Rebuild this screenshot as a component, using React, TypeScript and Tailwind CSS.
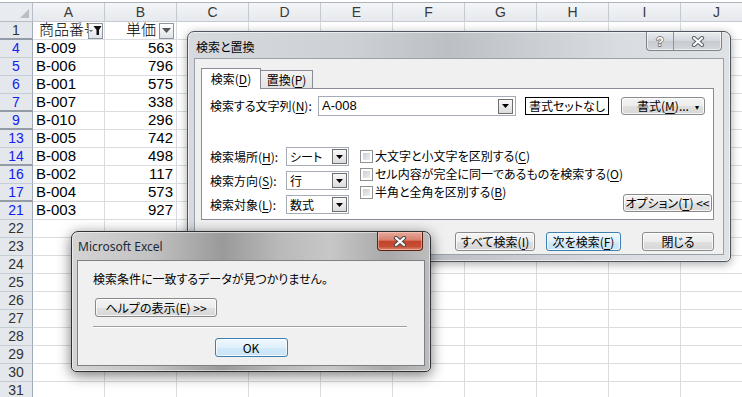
import React from "react";

type Row = { n: number; a?: string; b?: number };

const cols = ["A", "B", "C", "D", "E", "F", "G", "H", "I", "J"];

const rows: Row[] = [
  { n: 1 },
  { n: 4, a: "B-009", b: 563 },
  { n: 5, a: "B-006", b: 796 },
  { n: 6, a: "B-001", b: 575 },
  { n: 7, a: "B-007", b: 338 },
  { n: 9, a: "B-010", b: 296 },
  { n: 13, a: "B-005", b: 742 },
  { n: 14, a: "B-008", b: 498 },
  { n: 16, a: "B-002", b: 117 },
  { n: 17, a: "B-004", b: 573 },
  { n: 21, a: "B-003", b: 927 },
  ...Array.from({ length: 10 }, (_, i) => ({ n: 22 + i })),
];

const ui =
  "font-['Noto_Sans_CJK_JP',sans-serif] text-[12px] leading-[14px] text-black whitespace-nowrap [font-feature-settings:'palt']";

const U = ({ children }: { children: React.ReactNode }) => (
  <span className="underline underline-offset-[2px]">{children}</span>
);

function WinButton({
  children,
  className = "",
  primary = false,
}: {
  children: React.ReactNode;
  className?: string;
  primary?: boolean;
}) {
  return (
    <div
      className={`flex shrink-0 items-center justify-center rounded-[3px] border shadow-[inset_0_0_0_1px_rgba(255,255,255,0.75)] ${
        primary
          ? "border-[#3c7fb1] bg-[linear-gradient(#eef7fd,#e0f0fb_50%,#d2e9f8_51%,#c9e4f6)]"
          : "border-[#8a8a8a] bg-[linear-gradient(#f4f4f4,#ececec_50%,#e0e0e0_51%,#d6d6d6)]"
      } ${className}`}
    >
      {children}
    </div>
  );
}

function DropBtn() {
  return (
    <div className="flex h-[15px] w-[15px] shrink-0 items-center justify-center border border-[#6f6f6f] bg-[linear-gradient(#f8f8f8,#dcdcdc)]">
      <svg width="7" height="4" viewBox="0 0 7 4">
        <path d="M0 0h7L3.5 4z" fill="#000" />
      </svg>
    </div>
  );
}

function Select({ value }: { value: string }) {
  return (
    <div className="flex h-[19px] w-[63px] items-center border border-[#a5acb5] bg-white pl-[3px] pr-[1px]">
      <span className="flex-1">{value}</span>
      <DropBtn />
    </div>
  );
}

function Check({ children }: { children: React.ReactNode }) {
  return (
    <div className="flex h-[18px] items-center gap-[2px]">
      <div className="h-[13px] w-[13px] shrink-0 border border-[#8e8f8f] bg-white p-[2px]">
        <div className="h-full w-full bg-[linear-gradient(135deg,#c9ced5,#eef0f2)]" />
      </div>
      <span>{children}</span>
    </div>
  );
}

function XGlyph({ dark }: { dark: string }) {
  return (
    <svg width="14" height="11" viewBox="0 0 14 11">
      <path d="M3 2 L11 9 M11 2 L3 9" stroke={dark} strokeWidth="4.2" strokeLinecap="round" />
      <path d="M3 2 L11 9 M11 2 L3 9" stroke="#fff" strokeWidth="2.2" strokeLinecap="round" />
    </svg>
  );
}

function FilterButton({ funnel }: { funnel?: boolean }) {
  return (
    <div className="flex h-[16px] w-[15px] shrink-0 items-center justify-center border border-[#8d96a1] bg-[linear-gradient(#ffffff,#dfe3e8)]">
      {funnel ? (
        <svg width="13" height="11" viewBox="0 0 13 11">
          <path d="M0 5h4L2 7z" fill="#6b6b6b" />
          <path d="M4.5 1h8L10 5v5H7.5V5z" fill="#111" />
        </svg>
      ) : (
        <svg width="9" height="5" viewBox="0 0 9 5">
          <path d="M0 0h9L4.5 5z" fill="#555" />
        </svg>
      )}
    </div>
  );
}

function SheetRow({ row, next }: { row: Row; next?: Row }) {
  const gap = next !== undefined && next.n !== row.n + 1;
  const blue = row.n >= 4 && row.n <= 21;
  return (
    <div className="flex h-[18px] shrink-0">
      <div
        className={`flex w-[33px] shrink-0 items-center justify-center border-r border-r-[#a3abb6] bg-[#e4e8ed] text-[14px] ${
          gap ? "border-b-2 border-b-[#939ba6]" : "border-b border-b-[#c6ccd3]"
        } ${blue ? "text-[#1020f0]" : "text-[#333]"}`}
      >
        {row.n}
      </div>
      {cols.map((c) => (
        <div
          key={c}
          className={`flex w-[72px] shrink-0 items-center overflow-hidden border-r border-b border-[#dadcdf] whitespace-nowrap ${
            c === "B" ? "justify-end" : ""
          }`}
        >
          {row.n === 1 && c === "A" && (
            <>
              <span className="min-w-0 flex-1 overflow-hidden pl-[6px] font-light">商品番号</span>
              <FilterButton funnel />
              <span className="w-[1px]" />
            </>
          )}
          {row.n === 1 && c === "B" && (
            <>
              <span className="pr-[3px] font-light">単価</span>
              <FilterButton />
              <span className="w-[2px]" />
            </>
          )}
          {row.n !== 1 && c === "A" && <span className="pl-[3px]">{row.a}</span>}
          {row.n !== 1 && c === "B" && <span className="pr-[3px]">{row.b}</span>}
        </div>
      ))}
    </div>
  );
}

function FindDialog() {
  return (
    <div className="absolute left-[187px] top-[31px] flex h-[231px] w-[544px] flex-col rounded-t-[7px] rounded-b-[5px] border border-[#4f555c] bg-[linear-gradient(90deg,#d6dade_0%,#cdd1d6_30%,#bcc0c5_48%,#c9cdd2_62%,#d9dce0_80%,#dfe2e5_100%)] shadow-[0_2px_10px_rgba(0,0,0,0.35),inset_0_0_0_1px_rgba(255,255,255,0.55)]">
      <div className="flex h-[26px] shrink-0 items-start">
        <div className={`${ui} pl-[8px] pt-[8px] text-[#111]`}>検索と置換</div>
        <div className="mr-[8px] ml-auto flex h-[19px] rounded-b-[4px] border border-t-0 border-[#7c838b] bg-[linear-gradient(#e9ecef,#d3d7dc_50%,#c6cbd1_51%,#d4d8dd)] shadow-[inset_0_0_0_1px_rgba(255,255,255,0.6)]">
          <div className="flex w-[27px] items-center justify-center border-r border-[#8e959d]">
            <svg width="12" height="14" viewBox="0 0 12 14">
              <text
                x="6"
                y="12"
                textAnchor="middle"
                fontSize="13"
                fontWeight="bold"
                fontFamily="Liberation Sans"
                fill="#fff"
                stroke="#5b6168"
                strokeWidth="1.3"
                paintOrder="stroke"
              >
                ?
              </text>
            </svg>
          </div>
          <div className="flex w-[47px] items-center justify-center">
            <XGlyph dark="#5b6168" />
          </div>
        </div>
      </div>
      <div className={`${ui} mx-[6px] flex h-[197px] shrink-0 flex-col border border-[#9aa1a9] bg-[#f0f0f0]`}>
        <div className="flex h-[29px] shrink-0 items-end pl-[6px]">
          <div className="relative z-10 -mb-px flex h-[21px] w-[60px] items-center justify-center border border-b-0 border-[#898c95] bg-white">
            検索(<U>D</U>)
          </div>
          <div className="flex h-[18px] w-[52px] items-center justify-center border border-l-0 border-b-0 border-[#898c95] bg-[linear-gradient(#f3f3f3,#e3e3e3)]">
            置換(<U>P</U>)
          </div>
        </div>
        <div className="ml-[6px] flex h-[132px] w-[513px] shrink-0 flex-col border border-[#898c95] bg-white">
          <div className="mt-[7px] flex h-[20px] items-center pl-[8px]">
            <span className="w-[108px]">
              検索する文字列(<U>N</U>):
            </span>
            <div className="flex h-[20px] w-[198px] items-center border border-[#a5acb5] bg-white pl-[3px] pr-[2px]">
              <span className="flex-1 font-['Liberation_Sans',sans-serif] text-[13px]">A-008</span>
              <DropBtn />
            </div>
            <div className="ml-[9px] flex h-[18px] w-[84px] items-center justify-center border border-black bg-white">
              書式セットなし
            </div>
            <WinButton className="relative ml-[12px] h-[18px] w-[84px]">
              書式(<U>M</U>)...
              <span className="absolute right-[5px] top-[2px] text-[8px]">▾</span>
            </WinButton>
          </div>
          <div className="mt-[31px] flex pl-[8px]">
            <div className="flex w-[76px] shrink-0 flex-col gap-[5px]">
              <div className="flex h-[19px] items-center">
                検索場所(<U>H</U>):
              </div>
              <div className="flex h-[19px] items-center">
                検索方向(<U>S</U>):
              </div>
              <div className="flex h-[19px] items-center">
                検索対象(<U>L</U>):
              </div>
            </div>
            <div className="flex shrink-0 flex-col gap-[5px]">
              <Select value="シート" />
              <Select value="行" />
              <Select value="数式" />
            </div>
            <div className="ml-[11px] flex shrink-0 flex-col">
              <Check>
                大文字と小文字を区別する(<U>C</U>)
              </Check>
              <Check>
                セル内容が完全に同一であるものを検索する(<U>O</U>)
              </Check>
              <Check>
                半角と全角を区別する(<U>B</U>)
              </Check>
            </div>
            <WinButton className="mr-[8px] ml-auto mt-[47px] h-[18px] w-[89px]">
              オプション(<U>T</U>) &lt;&lt;
            </WinButton>
          </div>
        </div>
        <div className="mt-[12px] flex justify-end pr-[9px]">
          <WinButton className="h-[19px] w-[80px]">
            すべて検索(<U>I</U>)
          </WinButton>
          <WinButton primary className="ml-[11px] h-[19px] w-[75px]">
            次を検索(<U>F</U>)
          </WinButton>
          <WinButton className="ml-[21px] h-[19px] w-[72px]">閉じる</WinButton>
        </div>
      </div>
    </div>
  );
}

function MessageBox() {
  return (
    <div className="absolute left-[71px] top-[231px] flex h-[141px] w-[360px] flex-col rounded-t-[7px] rounded-b-[5px] border border-[#2e3236] bg-[linear-gradient(90deg,#d4d4d4_0%,#c2c2c2_22%,#9a9a9a_42%,#b9b9b9_58%,#c7c7c7_72%,#a9a9a9_88%,#bdbdbd_100%)] shadow-[0_3px_14px_rgba(0,0,0,0.55),inset_0_0_0_1px_rgba(255,255,255,0.5)]">
      <div className="flex h-[28px] shrink-0 items-start">
        <div className="pl-[6px] pt-[8px] font-['Segoe_UI','Noto_Sans',sans-serif] text-[12px] leading-[14px] text-[#1b2a3a]">
          Microsoft Excel
        </div>
        <div className="mr-[7px] ml-auto flex h-[19px] w-[46px] items-center justify-center rounded-b-[4px] border border-t-0 border-[#5c2216] bg-[linear-gradient(#e9aa9c,#d8806c_45%,#c5432c_52%,#c64d34_80%,#dc8a6d)] shadow-[inset_0_0_0_1px_rgba(255,220,210,0.45)]">
          <XGlyph dark="#4a4a4a" />
        </div>
      </div>
      <div className={`${ui} mx-[5px] flex h-[106px] shrink-0 flex-col border border-[#7d8084] bg-[#f0f0f0]`}>
        <div className="pl-[15px] pt-[11px]">検索条件に一致するデータが見つかりません。</div>
        <WinButton className="mt-[12px] ml-[17px] h-[19px] w-[122px]">ヘルプの表示(E) &gt;&gt;</WinButton>
        <div className="mt-[9px] mr-[17px] ml-[15px] h-[2px] border-t border-b border-t-[#a0a0a0] border-b-white" />
        <div className="mt-[10px] flex justify-center">
          <WinButton primary className="h-[19px] w-[73px]">
            OK
          </WinButton>
        </div>
      </div>
    </div>
  );
}

export default function App() {
  return (
    <div className="relative h-[397px] w-[742px] overflow-hidden bg-white pt-[2px] font-['Liberation_Sans','Noto_Sans_CJK_JP',sans-serif] text-[15px] text-black">
      <div className="flex h-[20px] border-t border-[#aeb4bb]">
        <div className="flex w-[33px] shrink-0 items-end justify-end border-r border-b border-[#b7bec7] bg-[#e8ebef] pr-[3px] pb-[3px]">
          <svg width="9" height="9" viewBox="0 0 9 9">
            <path d="M0 9h9V0z" fill="#b8bfc8" />
          </svg>
        </div>
        {cols.map((c) => (
          <div
            key={c}
            className="flex w-[72px] shrink-0 items-center justify-center border-r border-b border-[#c5cad1] bg-[linear-gradient(#f3f5f7,#e6e9ed)] text-[14px] text-[#3a3a3a]"
          >
            {c}
          </div>
        ))}
      </div>
      {rows.map((r, i) => (
        <SheetRow key={r.n} row={r} next={rows[i + 1]} />
      ))}
      <FindDialog />
      <MessageBox />
    </div>
  );
}
